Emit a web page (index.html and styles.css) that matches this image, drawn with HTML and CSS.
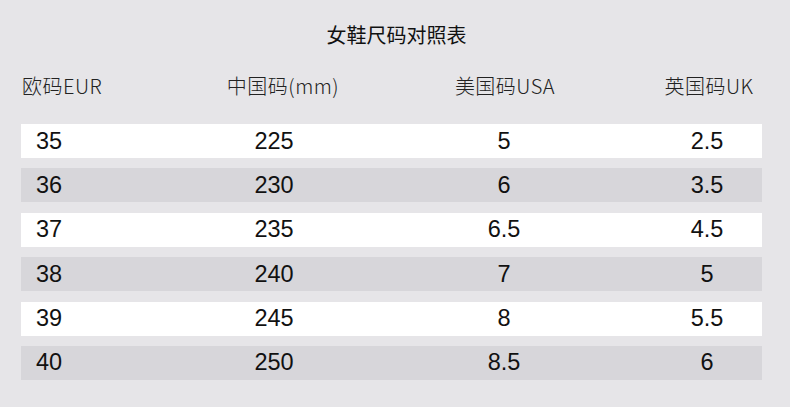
FILE: index.html
```html
<!DOCTYPE html>
<html lang="zh">
<head>
<meta charset="utf-8">
<link rel="stylesheet" href="styles.css">
</head>
<body>
<div class="page">
  <h1 class="title">女鞋尺码对照表</h1>
  <div class="head">
    <div class="h1">欧码EUR</div>
    <div class="h2">中国码(mm)</div>
    <div class="h3">美国码USA</div>
    <div class="h4">英国码UK</div>
  </div>
  <div class="rows">
    <div class="row white"><div class="c1">35</div><div class="c2">225</div><div class="c3">5</div><div class="c4">2.5</div></div>
    <div class="row gray"><div class="c1">36</div><div class="c2">230</div><div class="c3">6</div><div class="c4">3.5</div></div>
    <div class="row white"><div class="c1">37</div><div class="c2">235</div><div class="c3">6.5</div><div class="c4">4.5</div></div>
    <div class="row gray"><div class="c1">38</div><div class="c2">240</div><div class="c3">7</div><div class="c4">5</div></div>
    <div class="row white"><div class="c1">39</div><div class="c2">245</div><div class="c3">8</div><div class="c4">5.5</div></div>
    <div class="row gray"><div class="c1">40</div><div class="c2">250</div><div class="c3">8.5</div><div class="c4">6</div></div>
  </div>
</div>
</body>
</html>
```
FILE: styles.css
```css
html, body {
  margin: 0;
  padding: 0;
  background: #e6e5e8;
}
.page {
  width: 790px;
  height: 407px;
  padding: 0 28px 0 21px;
  box-sizing: border-box;
  font-family: "Liberation Sans", "Noto Sans CJK SC", sans-serif;
  color: #111;
}
.title {
  margin: 0;
  padding-top: 23px;
  height: 48px;
  box-sizing: border-box;
  text-align: center;
  font-family: "Noto Sans CJK SC", sans-serif;
  font-weight: 400;
  font-size: 20px;
  line-height: 24px;
  color: #111;
  padding-left: 10px;
}
.head {
  display: grid;
  grid-template-columns: 150px 224px 220px 1fr;
  height: 76px;
  padding-top: 24px;
  box-sizing: border-box;
  font-family: "Noto Sans CJK SC", sans-serif;
  font-weight: 300;
  font-size: 20px;
  line-height: 28px;
  letter-spacing: 0.5px;
  color: #222;
}
.head .h1 { padding-left: 1px; }
.head .h2, .head .h3, .head .h4 { text-align: center; }
.head .h4 { padding-left: 41px; }
.rows {
  display: flex;
  flex-direction: column;
  gap: 10.4px;
}
.row {
  display: grid;
  grid-template-columns: 160px 186px 274px 121px;
  height: 34px;
  align-items: center;
  font-size: 23.5px;
  color: #111;
}
.row.white { background: #ffffff; }
.row.gray { background: #d7d6da; }
.c1 { padding-left: 15px; }
.c2, .c3, .c4 { text-align: center; }
.c4 { padding-left: 11px; }
```
